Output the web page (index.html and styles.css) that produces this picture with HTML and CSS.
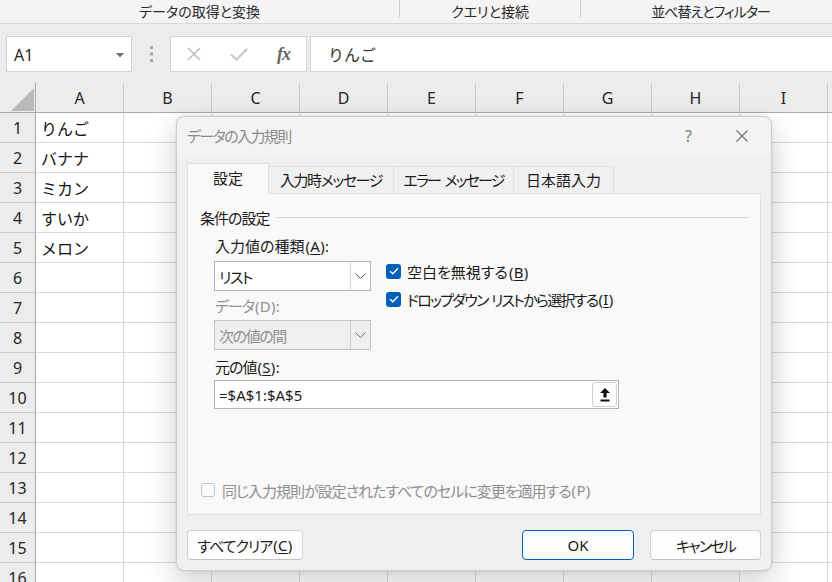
FILE: index.html
```html
<!DOCTYPE html>
<html lang="ja">
<head>
<meta charset="utf-8">
<title>データの入力規則</title>
<link rel="stylesheet" href="styles.css">
</head>
<body>
<div class="ribbon">
  <div class="rgroup g1">データの取得と変換</div>
  <div class="rsep"></div>
  <div class="rgroup g2">クエリと接続</div>
  <div class="rsep"></div>
  <div class="rgroup g3"><span class="tight">並べ替えとフィルター</span></div>
</div>
<div class="fbar">
  <div class="namebox"><span>A1</span><svg width="8" height="5" viewBox="0 0 8 5"><path d="M0 0H8L4 4.5Z" fill="#6d6d6d"/></svg></div>
  <div class="grip"><svg width="3" height="16" viewBox="0 0 3 16"><rect x="0" y="0" width="3" height="3" fill="#a8a8a8"/><rect x="0" y="6.5" width="3" height="3" fill="#a8a8a8"/><rect x="0" y="13" width="3" height="3" fill="#a8a8a8"/></svg></div>
  <div class="fxbox">
    <div class="fxslot"><svg width="14" height="14" viewBox="0 0 14 14"><path d="M1 1L13 13M13 1L1 13" stroke="#bdbdbd" stroke-width="1.6"/></svg></div>
    <div class="fxslot"><svg width="18" height="13" viewBox="0 0 18 13"><path d="M1 6.5L6.5 11.5 17 1" fill="none" stroke="#c6c6c6" stroke-width="2.2"/></svg></div>
    <div class="fxslot fx">fx</div>
  </div>
  <div class="formula">りんご</div>
</div>
<div class="sheet">
  <div class="corner"><svg width="23" height="23" viewBox="0 0 23 23"><path d="M23 0V23H0Z" fill="#b9b9b9"/></svg></div>
  <div class="ch">A</div><div class="ch">B</div><div class="ch">C</div><div class="ch">D</div><div class="ch">E</div><div class="ch">F</div><div class="ch">G</div><div class="ch">H</div><div class="ch">I</div><div class="ch"></div>

  <div class="rh">1</div><div class="c">りんご</div><div></div><div></div><div></div><div></div><div></div><div></div><div></div><div></div><div></div>
  <div class="rh">2</div><div class="c">バナナ</div><div></div><div></div><div></div><div></div><div></div><div></div><div></div><div></div><div></div>
  <div class="rh">3</div><div class="c">ミカン</div><div></div><div></div><div></div><div></div><div></div><div></div><div></div><div></div><div></div>
  <div class="rh">4</div><div class="c">すいか</div><div></div><div></div><div></div><div></div><div></div><div></div><div></div><div></div><div></div>
  <div class="rh">5</div><div class="c">メロン</div><div></div><div></div><div></div><div></div><div></div><div></div><div></div><div></div><div></div>
  <div class="rh">6</div><div></div><div></div><div></div><div></div><div></div><div></div><div></div><div></div><div></div><div></div>
  <div class="rh">7</div><div></div><div></div><div></div><div></div><div></div><div></div><div></div><div></div><div></div><div></div>
  <div class="rh">8</div><div></div><div></div><div></div><div></div><div></div><div></div><div></div><div></div><div></div><div></div>
  <div class="rh">9</div><div></div><div></div><div></div><div></div><div></div><div></div><div></div><div></div><div></div><div></div>
  <div class="rh">10</div><div></div><div></div><div></div><div></div><div></div><div></div><div></div><div></div><div></div><div></div>
  <div class="rh">11</div><div></div><div></div><div></div><div></div><div></div><div></div><div></div><div></div><div></div><div></div>
  <div class="rh">12</div><div></div><div></div><div></div><div></div><div></div><div></div><div></div><div></div><div></div><div></div>
  <div class="rh">13</div><div></div><div></div><div></div><div></div><div></div><div></div><div></div><div></div><div></div><div></div>
  <div class="rh">14</div><div></div><div></div><div></div><div></div><div></div><div></div><div></div><div></div><div></div><div></div>
  <div class="rh">15</div><div></div><div></div><div></div><div></div><div></div><div></div><div></div><div></div><div></div><div></div>
  <div class="rh">16</div><div></div><div></div><div></div><div></div><div></div><div></div><div></div><div></div><div></div><div></div>
</div>

<div class="dialog">
  <div class="dtitle">
    <span class="dname">データの入力規則</span>
    <span class="help">?</span>
    <span class="close"><svg width="12" height="12" viewBox="0 0 12 12"><path d="M0.5 0.5L11.5 11.5M11.5 0.5L0.5 11.5" stroke="#707070" stroke-width="1.1"/></svg></span>
  </div>
  <div class="tabs">
    <div class="tab active t1">設定</div>
    <div class="tab t2"><span class="kana">入力時メッセージ</span></div>
    <div class="tab t3"><span class="kana2">エラー メッセージ</span></div>
    <div class="tab t4">日本語入力</div>
  </div>
  <div class="panel">
    <div class="legend"><span class="tight">条件の設定</span><div class="rule"></div></div>
    <div class="fields">
      <div class="frow">
        <div class="lcol">
          <div class="lbl">入力値の種類<span class="lat">(<u>A</u>):</span></div>
          <div class="select"><span class="sval kana">リスト</span><span class="sarrow"><svg width="11" height="6" viewBox="0 0 11 6"><path d="M0.5 0.5L5.5 5.5 10.5 0.5" fill="none" stroke="#5f5f5f" stroke-width="1"/></svg></span></div>
          <div class="lbl dis l2"><span class="tight">データ</span><span class="lat">(D):</span></div>
          <div class="select disabled"><span class="sval kana">次の値の間</span><span class="sarrow"><svg width="11" height="6" viewBox="0 0 11 6"><path d="M0.5 0.5L5.5 5.5 10.5 0.5" fill="none" stroke="#6a6a6a" stroke-width="1"/></svg></span></div>
        </div>
        <div class="rcol">
          <div class="chk"><span class="box on"><svg width="10" height="8" viewBox="0 0 10 8"><path d="M1 4.2L3.8 6.8 9 1.2" fill="none" stroke="#fff" stroke-width="1.4"/></svg></span><span>空白を無視する<span class="lat">(<u>B</u>)</span></span></div>
          <div class="chk"><span class="box on"><svg width="10" height="8" viewBox="0 0 10 8"><path d="M1 4.2L3.8 6.8 9 1.2" fill="none" stroke="#fff" stroke-width="1.4"/></svg></span><span class="kana dd">ドロップダウン リストから選択する</span><span class="lat">(<u>I</u>)</span></div>
        </div>
      </div>
      <div class="lbl l3"><span class="tight">元の値</span><span class="lat">(<u>S</u>):</span></div>
      <div class="source"><span class="srcval">=$A$1:$A$5</span><span class="pick"><svg width="10" height="14" viewBox="0 0 10 14"><path d="M5 0L10 5H6.6V9.5H3.4V5H0Z" fill="#111"/><rect x="0.5" y="11.5" width="9" height="2" fill="#111"/></svg></span></div>
    </div>
    <div class="chk apply"><span class="box off"></span><span class="tight">同じ入力規則が設定されたすべてのセルに変更を適用する</span><span class="lat">(P)</span></div>
  </div>
  <div class="buttons">
    <div class="btn clear"><span class="tight">すべてクリア</span><span class="lat">(<u>C</u>)</span></div>
    <div class="btngroup">
      <div class="btn ok">OK</div>
      <div class="btn cancel"><span class="kana2">キャンセル</span></div>
    </div>
  </div>
</div>
</body>
</html>
```
FILE: styles.css
```css
* { box-sizing: border-box; margin: 0; padding: 0; }
html, body { width: 832px; height: 582px; overflow: hidden; }
body {
  background: #fff;
  font-family: "Noto Sans", "Noto Sans CJK JP", sans-serif;
  color: #1b1b1b;
  position: relative;
}
u { text-decoration: underline; text-underline-offset: 2px; }
.tight { letter-spacing: -1px; }
.kana { letter-spacing: -1.4px; word-spacing: 1px; }
.kana2 { letter-spacing: -1.8px; word-spacing: 2px; }
.dd { letter-spacing: -1.7px; }
.lat { letter-spacing: 0.3px; padding-left: 1px; }

/* ribbon group labels */
.ribbon {
  height: 24px;
  background: #f4f4f4;
  border-bottom: 1px solid #d8d8d8;
  display: flex;
  font-size: 14px;
  font-family: "Noto Sans CJK JP", sans-serif;
  font-feature-settings: "palt";
  color: #2a2a2a;
}
.rgroup { height: 23px; display: flex; align-items: center; justify-content: center; line-height: 1; padding-bottom: 2px; }
.g1 { width: 399px; }
.g2 { width: 180px; }
.g3 { flex: 1; padding-left: 8px; }
.rsep { width: 1px; height: 17px; background: #cbcbcb; }

/* formula bar */
.fbar {
  height: 59px;
  background: #ececec;
  display: flex;
  align-items: flex-start;
  padding-top: 12px;
}
.namebox {
  margin-left: 6px;
  width: 126px;
  height: 36px;
  background: #fff;
  border: 1px solid #d2d2d2;
  display: flex;
  align-items: center;
  justify-content: space-between;
  padding: 2px 7px 0 7px;
  font-size: 16px;
  color: #262626;
}
.grip { width: 38px; height: 36px; display: flex; align-items: center; justify-content: center; }
.fxbox {
  width: 137px;
  height: 36px;
  background: #fff;
  border: 1px solid #d2d2d2;
  display: flex;
}
.fxslot { width: 45px; display: flex; align-items: center; justify-content: center; }
.fx {
  font-family: "Liberation Serif", serif;
  font-style: italic;
  font-weight: bold;
  font-size: 18px;
  color: #666;
  letter-spacing: -1px;
}
.formula {
  flex: 1;
  margin-left: 3px;
  margin-right: -4px;
  height: 36px;
  background: #fff;
  border: 1px solid #d2d2d2;
  display: flex;
  align-items: center;
  padding-left: 17px;
  font-size: 16px;
  font-family: "Noto Sans CJK JP", sans-serif;
  color: #333;
}

/* sheet grid */
.sheet {
  display: grid;
  grid-template-columns: 36px repeat(10, 88px);
  grid-auto-rows: 30px;
  width: 916px;
}
.sheet > div {
  border-right: 1px solid #dadada;
  border-bottom: 1px solid #dadada;
}
.sheet > .corner {
  background: #ececec;
  border-right-color: #a9a9a9;
  border-bottom-color: #a9a9a9;
  display: flex;
  align-items: flex-end;
  justify-content: flex-end;
  padding: 0 1px 1px 0;
}
.sheet > .ch {
  background: #ececec;
  border-right-color: #c9c9c9;
  border-bottom-color: #a9a9a9;
  display: flex;
  align-items: center;
  justify-content: center;
  font-size: 16px;
  color: #262626;
}
.sheet > .rh {
  background: #ececec;
  border-right-color: #a9a9a9;
  border-bottom-color: #c9c9c9;
  display: flex;
  align-items: center;
  justify-content: center;
  font-size: 16px;
  color: #262626;
}
.sheet > .c {
  display: flex;
  align-items: center;
  padding-left: 5px;
  font-size: 16px;
  font-family: "Noto Sans CJK JP", sans-serif;
  color: #111;
}

/* dialog */
.dialog {
  position: absolute;
  left: 176px;
  top: 116px;
  width: 596px;
  background: #f0f0f0;
  border: 1px solid #cdcdcd;
  border-radius: 8px;
  box-shadow: 0 10px 30px rgba(0,0,0,0.20), 0 0 3px rgba(0,0,0,0.10);
  padding: 0 10px 10px 10px;
  font-size: 15px;
  font-feature-settings: "palt";
  color: #1b1b1b;
}
.dtitle {
  height: 37px;
  margin: 0 -10px;
  padding-left: 10px;
  display: flex;
  align-items: center;
  background: #f3f3f3;
  border-radius: 8px 8px 0 0;
  color: #8a8a8a;
}
.dname { letter-spacing: -1.6px; }
.help { margin-left: auto; font-size: 16px; color: #7b7b7b; width: 51px; }
.close { display: flex; margin-right: 23px; }

.tabs {
  margin-top: 9px;
  height: 30px;
  display: flex;
  align-items: flex-end;
}
.tab {
  height: 27px;
  margin-right: -1px;
  border: 1px solid #e1e1e1;
  border-bottom: none;
  background: #f0f0f0;
  display: flex;
  align-items: center;
  justify-content: center;
  padding-bottom: 1px;
}
.tab.active {
  height: 31px;
  margin-bottom: -1px;
  background: #f9f9f9;
  position: relative;
  z-index: 1;
  padding-bottom: 3px;
}
.t1 { width: 82px; }
.t2 { width: 126px; }
.t3 { width: 121px; }
.t4 { width: 101px; }

.panel {
  height: 322px;
  background: #f9f9f9;
  border: 1px solid #e1e1e1;
  display: flex;
  flex-direction: column;
  padding: 14px 11px 13px 12px;
}
.legend { height: 18px; display: flex; align-items: center; }
.rule { flex: 1; height: 1px; background: #d9d9d9; margin-left: 8px; }

.fields { margin-left: 14px; margin-top: 9px; }
.frow { display: flex; }
.lcol { width: 157px; }
.lbl { height: 22px; line-height: 22px; padding-left: 1px; white-space: nowrap; }
.lbl.dis { color: #8f8f8f; }
.l2 { margin-top: 4px; }
.l3 { margin-top: 6px; }

.select {
  margin-top: 4px;
  height: 30px;
  background: #fff;
  border: 1px solid #b3b3b3;
  display: flex;
}
.select.disabled { margin-top: 3px; background: #efefef; border-color: #c2c2c2; color: #8f8f8f; }
.sval { flex: 1; display: flex; align-items: center; padding-left: 4px; font-family: "Noto Sans CJK JP", sans-serif; }
.sarrow { width: 20px; border-left: 1px solid #d4d4d4; display: flex; align-items: center; justify-content: center; }
.select.disabled .sarrow { border-left-color: #cfcfcf; }

.rcol { margin-left: 15px; padding-top: 22px; }
.chk { height: 28px; display: flex; align-items: center; white-space: nowrap; }
.box {
  width: 15px; height: 15px;
  border-radius: 3px;
  margin-right: 6px;
  display: flex; align-items: center; justify-content: center;
  flex: none;
}
.box.on { background: #005fb8; }
.box.off { width: 14px; height: 14px; border: 1px solid #c3c3c3; background: #fbfbfb; margin-right: 7px; }

.source {
  margin-top: 2px;
  width: 405px;
  height: 29px;
  background: #fff;
  border: 1px solid #b3b3b3;
  display: flex;
  align-items: center;
  padding: 0 1px 0 4px;
}
.srcval { flex: 1; }
.pick {
  width: 25px; height: 25px;
  border: 1px solid #d0d0d0;
  border-radius: 3px;
  background: #fdfdfd;
  display: flex; align-items: center; justify-content: center;
}

.apply { margin-top: auto; height: 22px; margin-left: 1px; color: #8f8f8f; }

.buttons {
  margin-top: 15px;
  height: 30px;
  display: flex;
  justify-content: space-between;
}
.btngroup { display: flex; gap: 16px; }
.btn {
  height: 30px;
  background: #fdfdfd;
  border: 1px solid #d3d3d3;
  border-bottom-color: #c2c2c2;
  border-radius: 4px;
  display: flex; align-items: center; justify-content: center;
}
.clear { width: 116px; }
.ok { width: 112px; border: 1px solid #005fb8; }
.cancel { width: 111px; }
```
